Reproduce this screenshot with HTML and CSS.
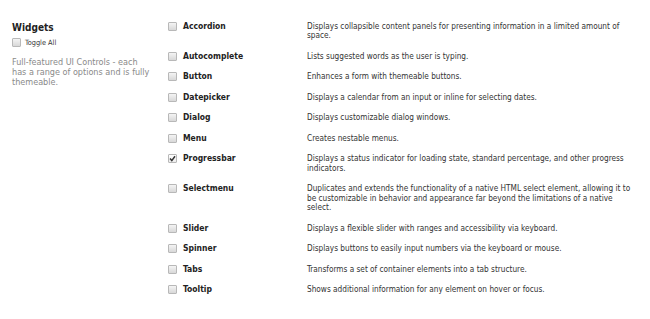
FILE: index.html
```html
<!DOCTYPE html>
<html>
<head>
<meta charset="utf-8">
<link rel="stylesheet" href="styles.css">
</head>
<body>
<div class="page">
  <aside class="side">
    <h2 class="title">Widgets</h2>
    <label class="toggle"><span class="cb"></span>Toggle All</label>
    <p class="intro">Full-featured UI Controls - each has a range of options and is fully themeable.</p>
  </aside>
  <div class="list">
    <div class="row"><span class="cb"></span><span class="name">Accordion</span><span class="desc">Displays collapsible content panels for presenting information in a limited amount of<br>space.</span></div>
    <div class="row"><span class="cb"></span><span class="name">Autocomplete</span><span class="desc">Lists suggested words as the user is typing.</span></div>
    <div class="row"><span class="cb"></span><span class="name">Button</span><span class="desc">Enhances a form with themeable buttons.</span></div>
    <div class="row"><span class="cb"></span><span class="name">Datepicker</span><span class="desc">Displays a calendar from an input or inline for selecting dates.</span></div>
    <div class="row"><span class="cb"></span><span class="name">Dialog</span><span class="desc">Displays customizable dialog windows.</span></div>
    <div class="row"><span class="cb"></span><span class="name">Menu</span><span class="desc">Creates nestable menus.</span></div>
    <div class="row"><span class="cb checked"><svg viewBox="0 0 9 9" width="9" height="9"><path d="M2 4.6 L3.8 6.6 L7 2.2" fill="none" stroke="#333" stroke-width="1.5"/></svg></span><span class="name">Progressbar</span><span class="desc">Displays a status indicator for loading state, standard percentage, and other progress<br>indicators.</span></div>
    <div class="row"><span class="cb"></span><span class="name">Selectmenu</span><span class="desc">Duplicates and extends the functionality of a native HTML select element, allowing it to<br>be customizable in behavior and appearance far beyond the limitations of a native<br>select.</span></div>
    <div class="row"><span class="cb"></span><span class="name">Slider</span><span class="desc">Displays a flexible slider with ranges and accessibility via keyboard.</span></div>
    <div class="row"><span class="cb"></span><span class="name">Spinner</span><span class="desc">Displays buttons to easily input numbers via the keyboard or mouse.</span></div>
    <div class="row"><span class="cb"></span><span class="name">Tabs</span><span class="desc">Transforms a set of container elements into a tab structure.</span></div>
    <div class="row"><span class="cb"></span><span class="name">Tooltip</span><span class="desc">Shows additional information for any element on hover or focus.</span></div>
  </div>
</div>
</body>
</html>
```
FILE: styles.css
```css
html, body {
  margin: 0;
  padding: 0;
  background: #ffffff;
}
body {
  font-family: "DejaVu Sans Condensed", "DejaVu Sans", sans-serif;
  color: #333;
}
.page {
  display: flex;
  align-items: flex-start;
  width: 650px;
}
.side {
  width: 141px;
  padding: 21px 0 0 12px;
  box-sizing: content-box;
}
.title {
  margin: 0;
  font-size: 10px;
  line-height: 13px;
  font-weight: bold;
  color: #222;
}
.toggle {
  display: flex;
  align-items: center;
  gap: 4px;
  margin-top: 4px;
  font-size: 7.3px;
  line-height: 9px;
  color: #333;
}
.intro {
  margin: 10px 0 0;
  font-size: 9px;
  line-height: 10px;
  color: #8a8a8a;
}
.list {
  margin-left: 15px;
  width: 482px;
  padding-top: 16px;
}
.row {
  display: grid;
  grid-template-columns: 15px 124px 1fr;
  align-items: start;
  padding: 5.5px 0 5.5px 0;
}
.cb {
  display: block;
  width: 7px;
  height: 7px;
  border: 1px solid #b8b8b8;
  border-radius: 1px;
  background: linear-gradient(#f4f4f4, #d8d8d8);
}
.cb.checked {
  background: linear-gradient(#ffffff, #ececec);
  position: relative;
}
.cb.checked svg {
  position: absolute;
  left: -1px;
  top: -1px;
}
.name {
  font-size: 8.5px;
  line-height: 9.5px;
  font-weight: bold;
  color: #222;
}
.desc {
  font-size: 8.2px;
  line-height: 9.5px;
  color: #333;
}
```
